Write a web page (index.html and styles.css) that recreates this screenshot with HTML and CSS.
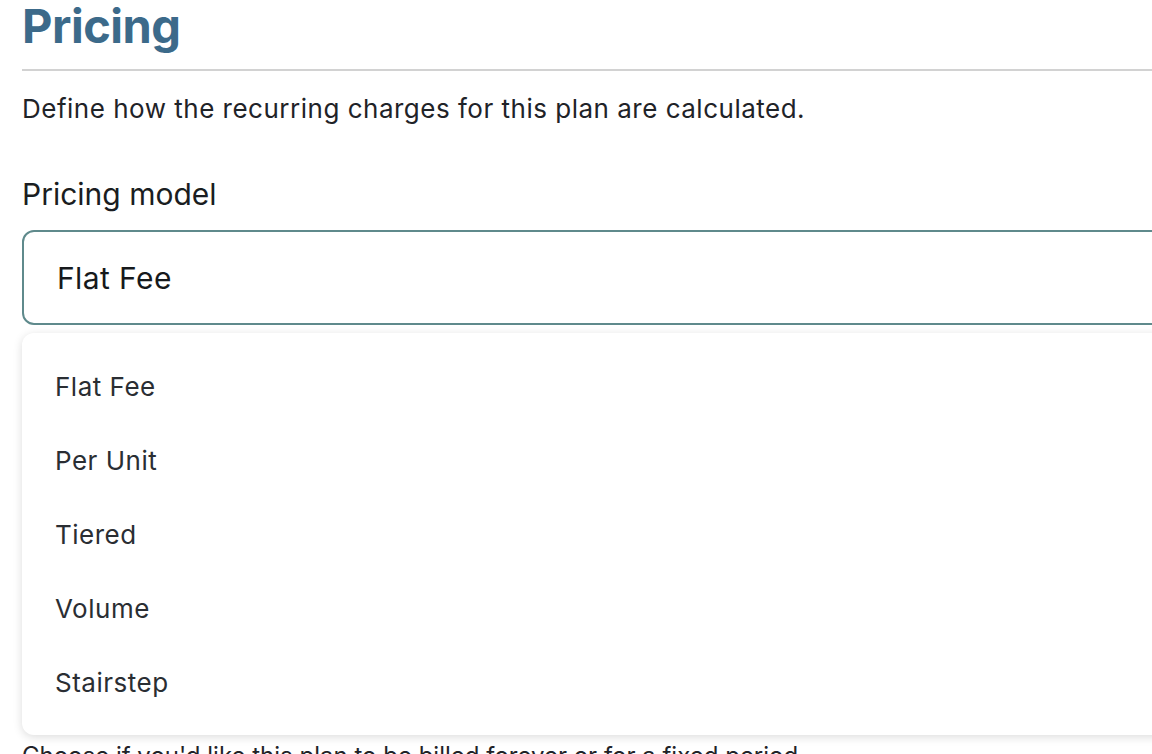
FILE: index.html
```html
<!DOCTYPE html>
<html lang="en">
<head>
    <meta charset="UTF-8">
    <meta name="viewport" content="width=device-width, initial-scale=1.0">
    <title>Pricing</title>
    <link rel="stylesheet" href="styles.css">
</head>
<body>
    <div class="page">
        <h1 class="section-title">Pricing</h1>
        <hr class="divider">
        <p class="description">Define how the recurring charges for this plan are calculated.</p>

        <div class="form-group">
            <label for="pricing-model">Pricing model</label>
            <div class="select-wrap">
                <div class="select" id="pricing-model">Flat Fee</div>
                <ul class="dropdown">
                    <li>Flat Fee</li>
                    <li>Per Unit</li>
                    <li>Tiered</li>
                    <li>Volume</li>
                    <li>Stairstep</li>
                </ul>
            </div>
        </div>

        <div class="form-group next-group">
            <p class="hint">Choose if you'd like this plan to be billed forever or for a fixed period.</p>
        </div>
    </div>
</body>
</html>
```

FILE: styles.css
```css
body {
    font-family: 'Inter', 'Liberation Sans', sans-serif;
    background-color: #ffffff;
    margin: 0;
    padding: 0;
    overflow: hidden;
}
.page {
    padding: 0 0 0 22px;
    width: 1200px;
    box-sizing: border-box;
}
.section-title {
    font-size: 47px;
    font-weight: 700;
    letter-spacing: -0.5px;
    color: #3c6a8a;
    margin: 0;
    line-height: 52px;
}
.divider {
    border: none;
    height: 2px;
    background-color: #d2d2d2;
    margin: 17px 0 0 0;
}
.description {
    font-size: 26px;
    letter-spacing: 0.5px;
    color: #1f2328;
    margin: 22px 0 0 0;
    line-height: 32px;
}
.form-group {
    margin-top: 51px;
}
label {
    display: block;
    font-size: 30px;
    color: #1a1d21;
    line-height: 36px;
    margin-bottom: 18px;
}
.select-wrap {
    position: relative;
}
.select {
    border: 2px solid #5f8a8c;
    border-radius: 12px;
    height: 95px;
    box-sizing: border-box;
    padding: 0 33px;
    display: flex;
    align-items: center;
    font-size: 30px;
    letter-spacing: 0.4px;
    color: #16191c;
}
.dropdown {
    position: absolute;
    top: 103px;
    left: 0;
    right: 0;
    margin: 0;
    padding: 16px 0;
    list-style: none;
    background-color: #ffffff;
    border-radius: 12px;
    box-shadow: 0 2px 10px rgba(0, 0, 0, 0.14);
    z-index: 2;
}
.dropdown li {
    height: 74px;
    display: flex;
    align-items: center;
    padding: 0 33px;
    font-size: 26px;
    letter-spacing: 0.5px;
    color: #2a2e33;
}
.next-group {
    margin-top: 0;
    padding-top: 415px;
}
.hint {
    font-size: 24px;
    color: #1f2328;
    margin: 0;
    line-height: 32px;
}
```
